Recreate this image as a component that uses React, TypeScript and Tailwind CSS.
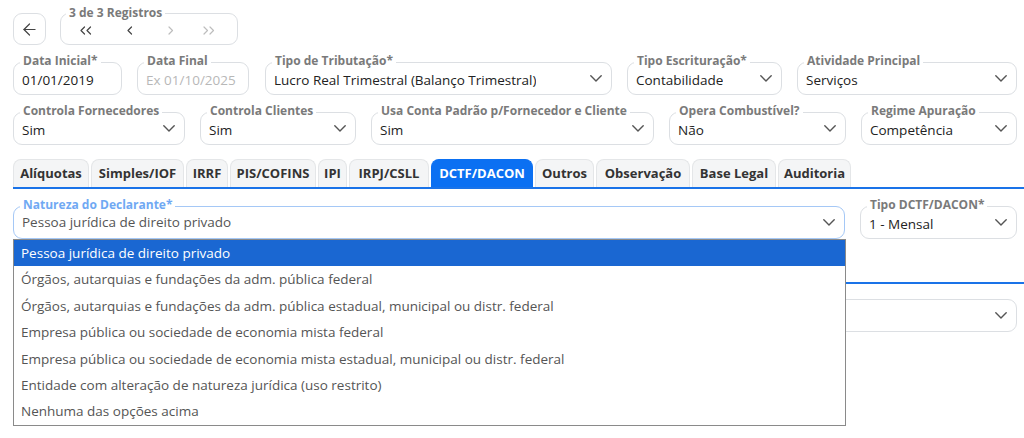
import React from 'react';
import { ArrowLeft } from 'lucide-react';

const font = { fontFamily: '"Open Sans", "Noto Sans", sans-serif' };

const Chevron: React.FC<{ className?: string }> = ({ className }) => (
  <svg width="12" height="7" viewBox="0 0 12 7" fill="none" className={className}>
    <path d="M0.8 0.8L6 6L11.2 0.8" stroke="currentColor" strokeWidth="1.4" strokeLinecap="round" strokeLinejoin="round" />
  </svg>
);

const NavArrow: React.FC<{ dir: 'l' | 'r'; double?: boolean; className?: string }> = ({ dir, double, className }) => {
  const one = dir === 'l' ? 'M4.5 1L1 4.5L4.5 8' : 'M1 1L4.5 4.5L1 8';
  const two = dir === 'l' ? 'M10.5 1L7 4.5L10.5 8' : 'M7 1L10.5 4.5L7 8';
  return (
    <svg width={double ? 12 : 6} height="9" viewBox={double ? '0 0 12 9' : '0 0 6 9'} fill="none" className={className}>
      <path d={one} stroke="currentColor" strokeWidth="1.2" strokeLinecap="round" strokeLinejoin="round" />
      {double && <path d={two} stroke="currentColor" strokeWidth="1.2" strokeLinecap="round" strokeLinejoin="round" />}
    </svg>
  );
};

type FieldProps = {
  label: string;
  value: string;
  width?: string;
  select?: boolean;
  placeholder?: boolean;
  focused?: boolean;
};

const Field: React.FC<FieldProps> = ({ label, value, width = 'flex-1', select = true, placeholder, focused }) => (
  <div className={`relative ${width}`}>
    <span
      className={`absolute -top-[7px] left-[7px] px-[3px] bg-white text-[12px] font-bold leading-none ${
        focused ? 'text-[#70a9f3]' : 'text-[#7a7a7a]'
      }`}
    >
      {label}
    </span>
    <div
      className={`h-[33px] flex items-center justify-between pl-[8px] pr-[9px] rounded-[9px] border ${
        focused ? 'border-[#a5c8f6]' : 'border-[#dcdfe3]'
      }`}
    >
      <span
        className={`text-[13.5px] truncate ${focused ? '' : 'pt-[4px]'} ${
          placeholder ? 'text-[#b8b8b8]' : focused ? 'text-[#555]' : 'text-[#222]'
        }`}
      >
        {value}
      </span>
      {select && <Chevron className="text-[#555] shrink-0" />}
    </div>
  </div>
);

const tabs = [
  { t: 'Alíquotas', w: 'w-[76px]' },
  { t: 'Simples/IOF', w: 'w-[93px]' },
  { t: 'IRRF', w: 'w-[42px]' },
  { t: 'PIS/COFINS', w: 'w-[86px]' },
  { t: 'IPI', w: 'w-[29px]' },
  { t: 'IRPJ/CSLL', w: 'w-[80px]' },
  { t: 'DCTF/DACON', w: 'w-[102px]' },
  { t: 'Outros', w: 'w-[59px]' },
  { t: 'Observação', w: 'w-[94px]' },
  { t: 'Base Legal', w: 'w-[84px]' },
  { t: 'Auditoria', w: 'w-[73px]' },
];

const options = [
  'Pessoa jurídica de direito privado',
  'Órgãos, autarquias e fundações da adm. pública federal',
  'Órgãos, autarquias e fundações da adm. pública estadual, municipal ou distr. federal',
  'Empresa pública ou sociedade de economia mista federal',
  'Empresa pública ou sociedade de economia mista estadual, municipal ou distr. federal',
  'Entidade com alteração de natureza jurídica (uso restrito)',
  'Nenhuma das opções acima',
];

export default function App() {
  return (
    <div style={font} className="w-[1024px] h-[438px] bg-white overflow-hidden pl-[13px] pr-[7px] pt-[13px] text-[#222]">
      {/* record navigation */}
      <div className="flex items-start gap-[14px]">
        <button className="w-[33px] h-[32px] rounded-[9px] border border-[#dcdfe3] flex items-center justify-center">
          <ArrowLeft size={19} strokeWidth={1.5} className="text-[#444]" />
        </button>
        <div className="relative w-[178px] h-[32px] rounded-[9px] border border-[#dcdfe3] flex items-center">
          <span className="absolute -top-[7px] left-[5px] px-[3px] bg-white text-[12px] font-bold leading-none text-[#7a7a7a]">
            3 de 3 Registros
          </span>
          <div className="w-full flex items-center pt-[3px] pl-[19px] gap-[29px]">
            <NavArrow dir="l" double className="text-[#444]" />
            <NavArrow dir="l" className="text-[#444] ml-[6px]" />
            <NavArrow dir="r" className="text-[#bdbdbd] ml-[6px]" />
            <NavArrow dir="r" double className="text-[#bdbdbd]" />
          </div>
        </div>
      </div>

      {/* row 1 */}
      <div className="flex mt-[17px]">
        <Field label="Data Inicial*" value="01/01/2019" width="w-[109px]" select={false} />
        <div className="w-[15px]" />
        <Field label="Data Final" value="Ex 01/10/2025" width="w-[112px]" select={false} placeholder />
        <div className="w-[16px]" />
        <Field label="Tipo de Tributação*" value="Lucro Real Trimestral (Balanço Trimestral)" width="w-[347px]" />
        <div className="w-[15px]" />
        <Field label="Tipo Escrituração*" value="Contabilidade" width="w-[155px]" />
        <div className="w-[15px]" />
        <Field label="Atividade Principal" value="Serviços" />
      </div>

      {/* row 2 */}
      <div className="flex mt-[17px]">
        <Field label="Controla Fornecedores" value="Sim" width="w-[172px]" />
        <div className="w-[15px]" />
        <Field label="Controla Clientes" value="Sim" width="w-[156px]" />
        <div className="w-[15px]" />
        <Field label="Usa Conta Padrão p/Fornecedor e Cliente" value="Sim" width="w-[283px]" />
        <div className="w-[15px]" />
        <Field label="Opera Combustível?" value="Não" width="w-[177px]" />
        <div className="w-[15px]" />
        <Field label="Regime Apuração" value="Competência" />
      </div>

      {/* tabs */}
      <div className="mt-[14px] -mr-[7px] flex items-end gap-[2px] border-b-2 border-[#1a73e8]">
        {tabs.map(({ t, w }) => {
          const active = t === 'DCTF/DACON';
          return (
            <div
              key={t}
              className={`${w} h-[28px] shrink-0 flex items-center justify-center rounded-t-[8px] border border-b-0 text-[13px] font-bold whitespace-nowrap ${
                active ? 'bg-[#0b70f2] border-[#0b70f2] text-white' : 'bg-[#f4f5f6] border-[#e4e6e8] text-[#333]'
              }`}
            >
              {t}
            </div>
          );
        })}
      </div>

      {/* DCTF/DACON content */}
      <div className="relative mt-[17px]">
        <div className="flex">
          <Field label="Natureza do Declarante*" value="Pessoa jurídica de direito privado" width="w-[832px]" focused />
          <div className="w-[15px]" />
          <Field label="Tipo DCTF/DACON*" value="1 - Mensal" />
        </div>

        <div className="mt-[43px] -mr-[7px] border-b-2 border-[#1a73e8]" />
        <div className="mt-[15px] flex">
          <div className="flex-1 h-[33px] rounded-[9px] border border-[#dcdfe3] flex items-center justify-end pr-[9px]">
            <Chevron className="text-[#555]" />
          </div>
        </div>

        {/* open select list */}
        <div className="absolute left-0 top-[33px] w-[833px] bg-white border border-[#8a8a8a]">
          {options.map((o, i) => (
            <div
              key={o}
              className={`h-[26.4px] flex items-center pl-[7px] text-[13.5px] whitespace-nowrap ${
                i === 0 ? 'bg-[#1a67d2] text-white' : 'text-[#555]'
              }`}
            >
              {o}
            </div>
          ))}
        </div>
      </div>
    </div>
  );
}
